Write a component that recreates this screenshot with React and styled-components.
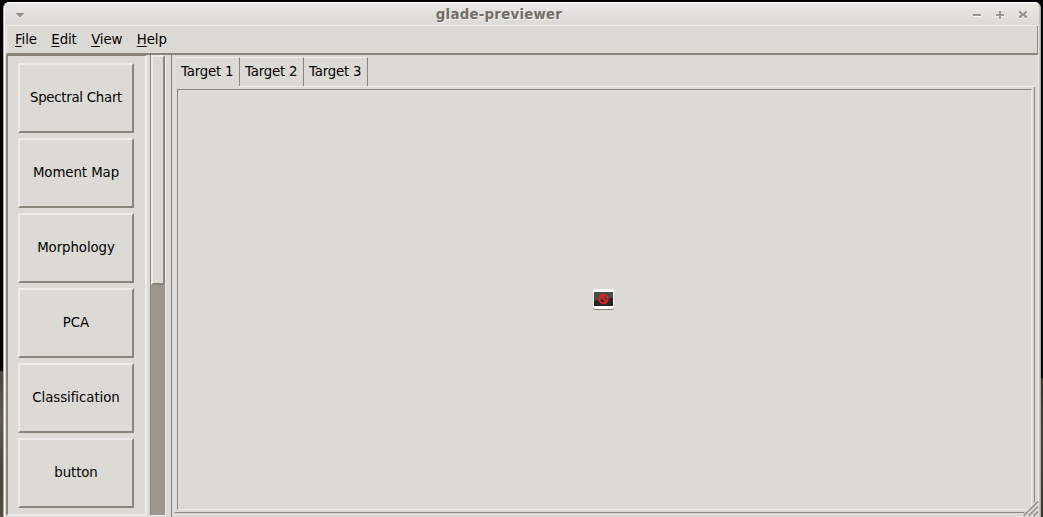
import React from "react";
import styled, { createGlobalStyle } from "styled-components";

const bg = "#dcdad5";
const light = "#eeece9";
const dark = "#89857b";

const Global = createGlobalStyle`
  * { box-sizing: border-box; }
  html, body { margin: 0; height: 100%; overflow: hidden; background: #000; }
  #root { height: 100%; }
  body { font: 13.33px "DejaVu Sans", sans-serif; color: #000; }
`;
const Desktop = styled.div`
  width: 1043px;
  height: 517px;
  padding: 2px 2px 0 3px;
  background:
    linear-gradient(#000 0 377px, #3c382f 379px, #4a453b 440px, #3f3b32) right / 4px 100% no-repeat,
    linear-gradient(#000 0 370px, #4b463d 372px, #5f5a51 420px, #4b463d 470px, #514b41);
`;
const Window = styled.div`
  height: 515px;
  display: flex;
  flex-direction: column;
  background: ${bg};
  border: solid #aaa79f;
  border-width: 0 1px;
  border-radius: 6px 6px 0 0;
  box-shadow: inset 1px 1px #fff, inset -1px 0 #c8c5be;
`;
const TitleBar = styled.header`
  height: 23px;
  flex: none;
  display: grid;
  grid-template-columns: 80px 1fr 80px;
  align-items: center;
  margin: 0 1px;
  background: linear-gradient(#f8f7f5 0 1px, #e8e7e3 2px, ${bg});
  border-radius: 5px 5px 0 0;
`;
const Title = styled.h1`
  margin: 0 0 0 -46px;
  padding-top: 2px;
  text-align: center;
  font-size: 13.33px;
  line-height: 21px;
  letter-spacing: 0.25px;
  color: #716d66;
  text-shadow: 1px 1px #f2f1ee;
`;
const TitleIcon = styled.svg`
  display: block;
  width: 80px;
  height: 23px;
  shape-rendering: crispEdges;
`;
const Client = styled.div`
  flex: 1;
  min-height: 0;
  display: flex;
  flex-direction: column;
  margin: 0 1px 0 2px;
  border-right: 1px solid ${light};
`;
const MenuBar = styled.nav`
  height: 30px;
  flex: none;
  display: flex;
  gap: 14.4px;
  padding: 5px 0 0 8px;
  line-height: 18px;
  border: 1px solid ${light};
  border-right-color: ${dark};
  border-bottom: 2px solid ${dark};
`;
const MenuItem = styled.span`
  white-space: nowrap;
  letter-spacing: -0.1px;
`;
const Mnemonic = styled.u`
  text-underline-offset: 2px;
  text-decoration-thickness: 1px;
`;
const Body = styled.main`
  flex: 1;
  min-height: 0;
  display: flex;
`;
const Viewport = styled.section`
  width: 141px;
  height: 461px;
  padding: 7px 0 0 10px;
  display: flex;
  flex-direction: column;
  gap: 5px;
  border: 2px solid ${light};
  border-left-color: ${dark};
  border-top: 1px solid ${dark};
`;
const ToolButton = styled.button`
  width: 116px;
  height: 70px;
  flex: none;
  padding: 0 0 2px;
  font: inherit;
  letter-spacing: ${(p) => p.$tracking}px;
  color: #000;
  background: ${bg};
  border: 2px solid;
  border-color: ${light} ${dark} ${dark} ${light};
`;
const ScrollTrack = styled.div`
  width: 16px;
  height: 461px;
  margin-left: 3px;
  background: #9c968e;
  border: solid;
  border-width: 0 1px 1px;
  border-color: ${dark} ${light} ${light} ${dark};
`;
const ScrollThumb = styled.div`
  height: 230px;
  background: ${bg};
  border: 2px solid;
  border-color: ${light} ${dark} ${dark} ${light};
`;
const Pane = styled.section`
  flex: 1;
  margin-left: 5px;
  border-left: 1px solid ${dark};
  padding: 2px 3px 0 2px;
`;
const Tabs = styled.div`
  display: flex;
  height: 29px;
`;
const Tab = styled.div`
  width: ${(p) => p.$width}px;
  padding: ${(p) => (p.$active ? "5px 0 0 6px" : "5px 0 0 5px")};
  line-height: 18px;
  letter-spacing: -0.22px;
  white-space: nowrap;
  border-top: 1px solid ${light};
  border-left: ${(p) => (p.$active ? `1px solid ${light}` : "0")};
  border-right: 1px solid ${dark};
`;
const TabLine = styled.div`
  height: 1px;
  margin-left: 65px;
  background: ${light};
`;
const Page = styled.div`
  height: 426px;
  padding: 2px;
  border: solid;
  border-width: 0 1px 1px;
  border-color: ${dark} ${dark} ${dark} ${light};
`;
const Frame = styled.div`
  height: 421px;
  display: grid;
  place-items: center;
  border: 1px solid;
  border-color: ${dark} ${light} ${light} ${dark};
`;
const MissingImage = styled.svg`
  width: 24px;
  height: 24px;
  display: block;
  margin-right: 1px;
`;
const Grip = styled.svg`
  position: absolute;
  left: 1021px;
  top: 499px;
  width: 18px;
  height: 18px;
`;

const buttons = [
  { label: "Spectral Chart", tracking: -0.27 },
  { label: "Moment Map", tracking: -0.08 },
  { label: "Morphology", tracking: -0.08 },
  { label: "PCA", tracking: 0 },
  { label: "Classification", tracking: -0.05 },
  { label: "button", tracking: -0.1 },
];
const menus = ["File", "Edit", "View", "Help"];

export default function App() {
  return (
    <Desktop>
      <Global />
      <Window>
        <TitleBar>
          <TitleIcon viewBox="0 0 80 23">
            <path d="M11 11h8v1h-1v1h-1v1h-1v1h-2v-1h-1v-1h-1v-1h-1z" fill="#98948b" />
          </TitleIcon>
          <Title>glade-previewer</Title>
          <TitleIcon viewBox="0 0 80 23">
            <path d="M14 14h8v1h-8zM37 14h8v1h-8zM40 17h2v1h-2z" fill="#fff" />
            <path d="M14 12h8v2h-8zM37 12h8v2h-8zM40 9h2v8h-2z" fill="#9b978e" />
            <path d="M60 16h2v1h-2zM66 16h2v1h-2z" fill="#fff" />
            <path d="M60 9h2v1h1v1h2v-1h1v-1h2v2h-1v1h-1v1h1v1h1v2h-2v-1h-1v-1h-2v1h-1v1h-2v-2h1v-1h1v-1h-1v-1h-1z" fill="#9b978e" />
          </TitleIcon>
        </TitleBar>
        <Client>
          <MenuBar>
            {menus.map((m) => (
              <MenuItem key={m}><Mnemonic>{m[0]}</Mnemonic>{m.slice(1)}</MenuItem>
            ))}
          </MenuBar>
          <Body>
            <Viewport>
              {buttons.map((b) => (
                <ToolButton key={b.label} $tracking={b.tracking}>{b.label}</ToolButton>
              ))}
            </Viewport>
            <ScrollTrack><ScrollThumb /></ScrollTrack>
            <Pane>
              <Tabs>
                <Tab $active $width={66}>Target 1</Tab>
                <Tab $width={64}>Target 2</Tab>
                <Tab $width={64}>Target 3</Tab>
              </Tabs>
              <TabLine />
              <Page>
                <Frame>
                  <MissingImage viewBox="0 0 24 24">
                    <rect x="1" y="2" width="21" height="20" rx="2" fill="#85837e" />
                    <rect x="1" y="1" width="21" height="20" rx="2" fill="#fbfbfa" />
                    <rect x="2" y="4" width="19" height="14" fill="#252625" />
                    <path d="M2 4h19v6q-9 0-19 3z" fill="#4a4b49" />
                    <circle cx="11.5" cy="11" r="4.3" fill="none" stroke="#e3221b" strokeWidth="2" />
                    <path d="M8.5 8l6 6" stroke="#e3221b" strokeWidth="2" />
                  </MissingImage>
                </Frame>
              </Page>
            </Pane>
          </Body>
        </Client>
      </Window>
      <Grip viewBox="0 0 18 18">
        <path d="M1 18L18 1v17z" fill={bg} />
        <path d="M1 17L17 1M6 17L17 6M11 17L17 11" stroke={light} strokeWidth="1.2" />
        <path d="M2.5 17L17 2.5M7.5 17L17 7.5M12.5 17L17 12.5" stroke="#9b978e" strokeWidth="1.8" />
      </Grip>
    </Desktop>
  );
}
